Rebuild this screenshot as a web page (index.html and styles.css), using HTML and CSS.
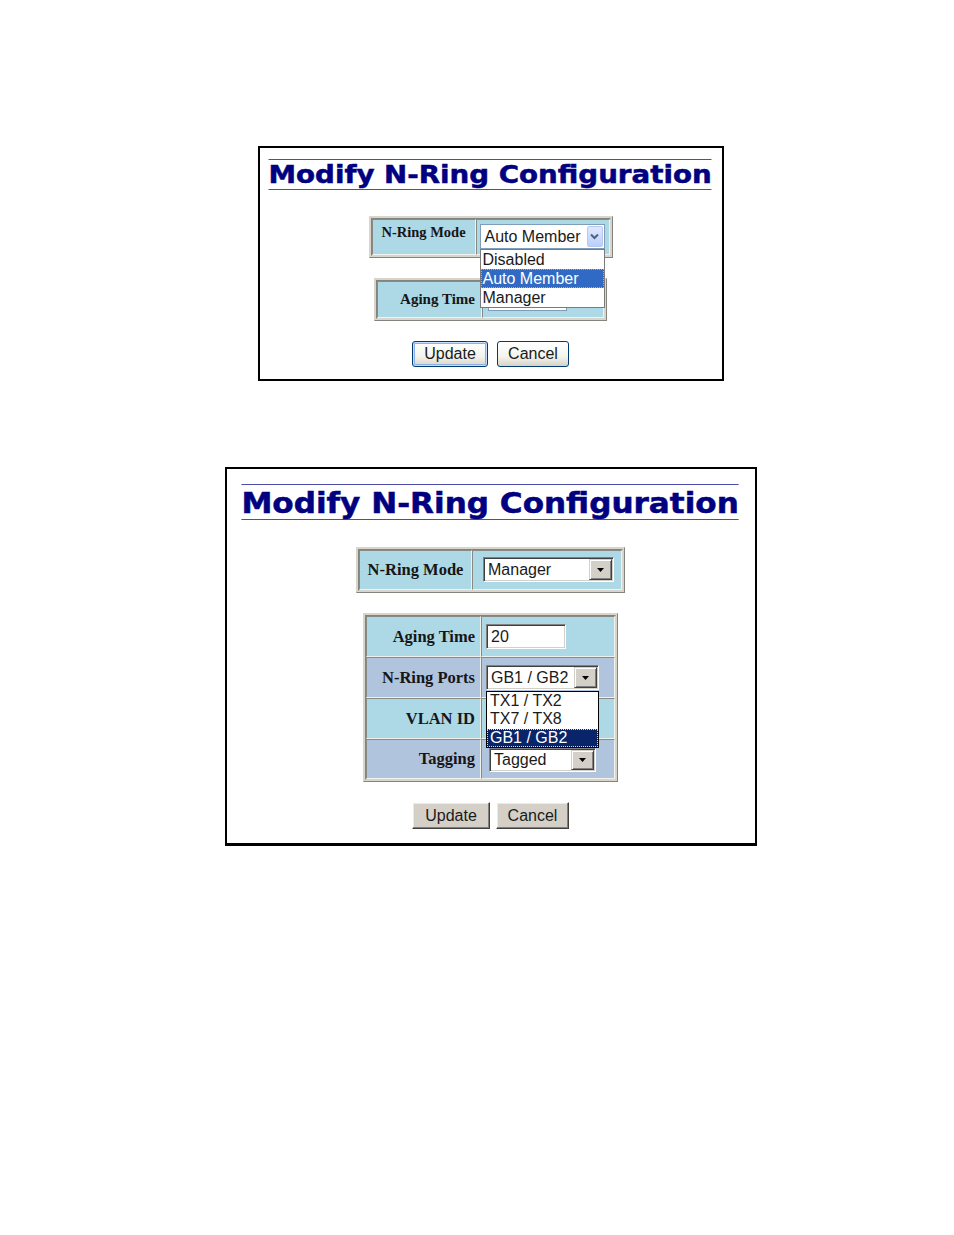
FILE: index.html
```html
<!DOCTYPE html>
<html>
<head>
<meta charset="utf-8">
<title>Modify N-Ring Configuration</title>
<link rel="stylesheet" href="styles.css">
</head>
<body>
<div class="page">
  <section class="panel p1">
    <h1 class="title t1">Modify N-Ring Configuration</h1>
    <div class="tbl tA">
      <div class="cell lbl top">N-Ring Mode</div>
      <div class="cell val">
        <div class="xpsel">
          <span class="seltext">Auto Member</span>
          <span class="xpbtn"><svg width="9" height="7" viewBox="0 0 9 7"><path d="M1 1.5 L4.5 5 L8 1.5" fill="none" stroke="#4d6185" stroke-width="2"/></svg></span>
        </div>
        <ul class="xplist">
          <li>Disabled</li>
          <li class="hl">Auto Member</li>
          <li>Manager</li>
        </ul>
      </div>
    </div>
    <div class="tbl tB">
      <div class="cell lbl right">Aging Time</div>
      <div class="cell val"><div class="xpinput"></div></div>
    </div>
    <div class="btns b1">
      <button class="xpbutton def upd">Update</button>
      <button class="xpbutton can">Cancel</button>
    </div>
  </section>

  <section class="panel p2">
    <h1 class="title t2">Modify N-Ring Configuration</h1>
    <div class="tbl tC">
      <div class="cell lbl center">N-Ring Mode</div>
      <div class="cell val">
        <div class="clsel modesel">
          <span class="seltext">Manager</span>
          <span class="clbtn"><svg width="7" height="4" viewBox="0 0 7 4"><path d="M0 0H7L3.5 4Z" fill="#000"/></svg></span>
        </div>
      </div>
    </div>
    <div class="tbl tD">
      <div class="cell lbl right">Aging Time</div>
      <div class="cell val"><div class="clinput agein"><span class="seltext">20</span></div></div>
      <div class="cell lbl right alt">N-Ring Ports</div>
      <div class="cell val alt">
        <div class="clsel portsel">
          <span class="seltext">GB1 / GB2</span>
          <span class="clbtn"><svg width="7" height="4" viewBox="0 0 7 4"><path d="M0 0H7L3.5 4Z" fill="#000"/></svg></span>
        </div>
        <ul class="cllist">
          <li>TX1 / TX2</li>
          <li>TX7 / TX8</li>
          <li class="hl">GB1 / GB2</li>
        </ul>
      </div>
      <div class="cell lbl right">VLAN ID</div>
      <div class="cell val"><div class="clinput vlanin"></div></div>
      <div class="cell lbl right alt">Tagging</div>
      <div class="cell val alt">
        <div class="clsel tagsel">
          <span class="seltext">Tagged</span>
          <span class="clbtn"><svg width="7" height="4" viewBox="0 0 7 4"><path d="M0 0H7L3.5 4Z" fill="#000"/></svg></span>
        </div>
      </div>
    </div>
    <div class="btns b2">
      <button class="clbutton upd2">Update</button>
      <button class="clbutton can2">Cancel</button>
    </div>
  </section>
</div>
</body>
</html>
```

FILE: styles.css
```css
html, body {
  margin: 0;
  background: #fff;
}

.page {
  padding: 146px 0 0 27px;
  display: flex;
  flex-direction: column;
  align-items: center;
  font-family: "Liberation Sans", Arial, sans-serif;
}

.panel {
  border: 2px solid #000;
  display: flex;
  flex-direction: column;
  align-items: center;
  background: #fff;
}

.p1 {
  width: 462px;
  padding: 11px 0 12px;
  margin-bottom: 86px;
}

.p2 {
  width: 528px;
  padding: 15px 0 14px;
  border-bottom-width: 3px;
}

.title {
  margin: 0;
  font-family: "DejaVu Sans", Verdana, sans-serif;
  font-weight: bold;
  color: #000080;
  -webkit-text-stroke: 0.5px #000080;
  border-top: 1px solid #4c4caa;
  border-bottom: 1px solid #4c4caa;
  white-space: nowrap;
  transform-origin: center;
}

.t1 {
  font-size: 24.5px;
  line-height: 28px;
  padding-top: 1px;
  transform: scaleX(1.13);
}

.t2 {
  font-size: 27.5px;
  line-height: 32px;
  padding-top: 2px;
  transform: scaleX(1.13);
}

.tbl {
  display: grid;
  border: 3px ridge #d8d6cc;
}

.tA {
  grid-template-columns: 104px 134px;
  grid-template-rows: 36px;
  margin-top: 26px;
}

.tB {
  grid-template-columns: 105px 122px;
  grid-template-rows: 37px;
  margin-top: 20px;
}

.tC {
  grid-template-columns: 113px 150px;
  grid-template-rows: 40px;
  margin-top: 27px;
}

.tD {
  grid-template-columns: 115px 134px;
  grid-template-rows: 41px 41px 41px 40px;
  margin-top: 20px;
}

.cell {
  box-sizing: border-box;
  background: #add8e6;
  border: 1px solid;
  border-color: #8a8a84 #f2f2ec #f2f2ec #8a8a84;
}

.cell.alt {
  background: #b0c4de;
}

.lbl {
  display: flex;
  font-family: "Liberation Serif", "Times New Roman", serif;
  font-weight: bold;
  color: #161616;
  white-space: nowrap;
}

.p1 .lbl {
  font-size: 14.5px;
}

.p1 .tB .lbl {
  font-size: 15px;
  padding-right: 6px;
}

.p2 .lbl {
  font-size: 16.5px;
}

.lbl.center {
  justify-content: center;
  align-items: center;
}

.lbl.top {
  justify-content: center;
  align-items: flex-start;
  padding-top: 4px;
}

.lbl.right {
  justify-content: flex-end;
  align-items: center;
  padding-right: 5px;
}

.val {
  position: relative;
}

.seltext {
  flex: 1;
  font-size: 16px;
  color: #1a1a1a;
  white-space: nowrap;
}

/* XP style select (panel 1) */
.xpsel {
  box-sizing: border-box;
  margin: 4px 0 0 3px;
  width: 125px;
  height: 25px;
  border: 1px solid #7f9db9;
  background: #fff;
  display: flex;
  align-items: center;
}

.xpsel .seltext {
  padding-left: 4px;
}

.xpbtn {
  box-sizing: border-box;
  width: 16px;
  height: 21px;
  margin-right: 1px;
  background: linear-gradient(#e0e9fd, #bccffa);
  border: 1px solid #b6c9f3;
  border-radius: 2px;
  display: flex;
  align-items: center;
  justify-content: center;
}

.xplist {
  position: absolute;
  left: 3px;
  top: 29px;
  z-index: 5;
  box-sizing: border-box;
  width: 125px;
  margin: 0;
  padding: 0;
  list-style: none;
  border: 1px solid #7a7a7a;
  background: #fff;
}

.xplist li {
  height: 19px;
  line-height: 19px;
  padding-left: 2px;
  font-size: 16px;
  color: #1a1a1a;
}

.xplist li.hl {
  background: #316ac5;
  color: #fff;
  outline: 1px dotted #d8a860;
  outline-offset: -1px;
}

.xpinput {
  box-sizing: border-box;
  margin: 7px 0 0 5px;
  width: 79px;
  height: 22px;
  border: 1px solid #7f9db9;
  background: #fff;
}

/* XP buttons */
.btns {
  display: flex;
  margin-top: 20px;
}

.b1 {
  gap: 9px;
}

.xpbutton {
  box-sizing: border-box;
  height: 26px;
  padding: 0;
  border: 1px solid #003c74;
  border-radius: 3px;
  background: linear-gradient(#ffffff, #f4f4ee 60%, #d8d2c6);
  font-family: "Liberation Sans", Arial, sans-serif;
  font-size: 16px;
  color: #1a1a1a;
}

.xpbutton.def {
  box-shadow: inset 0 0 0 1px #c6dcfc, inset 0 0 0 2px #8fb0e8;
}

.upd { width: 76px; }
.can { width: 72px; }

/* Classic (win98) controls, panel 2 */
.clsel,
.clinput {
  box-sizing: border-box;
  display: flex;
  align-items: center;
  padding: 1px;
  background: #fff;
  border: 1px solid;
  border-color: #808080 #fff #fff #808080;
  box-shadow: inset 1px 1px 0 #404040, inset -1px -1px 0 #d4d0c8;
}

.clsel .seltext,
.clinput .seltext {
  padding-left: 3px;
}

.modesel {
  margin: 6px 0 0 10px;
  width: 131px;
  height: 25px;
}

.agein {
  margin: 7px 0 0 4px;
  width: 80px;
  height: 25px;
}

.vlanin {
  margin: 7px 0 0 4px;
  width: 80px;
  height: 25px;
}

.portsel {
  margin: 7px 0 0 4px;
  width: 113px;
  height: 25px;
}

.tagsel {
  margin: 8px 0 0 7px;
  width: 107px;
  height: 24px;
}

.clbtn {
  box-sizing: border-box;
  align-self: stretch;
  width: 23px;
  background: #d4d0c8;
  border: 1px solid;
  border-color: #d4d0c8 #404040 #404040 #d4d0c8;
  box-shadow: inset 1px 1px 0 #fff, inset -1px -1px 0 #808080;
  display: flex;
  align-items: center;
  justify-content: center;
}

.cllist {
  position: absolute;
  left: 4px;
  top: 33px;
  z-index: 5;
  box-sizing: border-box;
  width: 113px;
  margin: 0;
  padding: 0;
  list-style: none;
  border: 1px solid #000;
  background: #fff;
}

.cllist li {
  height: 18.3px;
  line-height: 18px;
  padding-left: 3px;
  font-size: 16px;
  color: #1a1a1a;
}

.cllist li.hl {
  background: #0a246a;
  color: #fff;
  outline: 1px dotted #e0e0c0;
  outline-offset: -1px;
}

.b2 {
  gap: 6px;
}

.clbutton {
  box-sizing: border-box;
  height: 27px;
  padding: 0;
  background: #d4d0c8;
  border: 1px solid;
  border-color: #fff #404040 #404040 #fff;
  box-shadow: inset -1px -1px 0 #808080, inset 1px 1px 0 #ecebe6;
  font-family: "Liberation Sans", Arial, sans-serif;
  font-size: 16px;
  color: #1a1a1a;
}

.upd2 { width: 78px; }
.can2 { width: 73px; }
```
